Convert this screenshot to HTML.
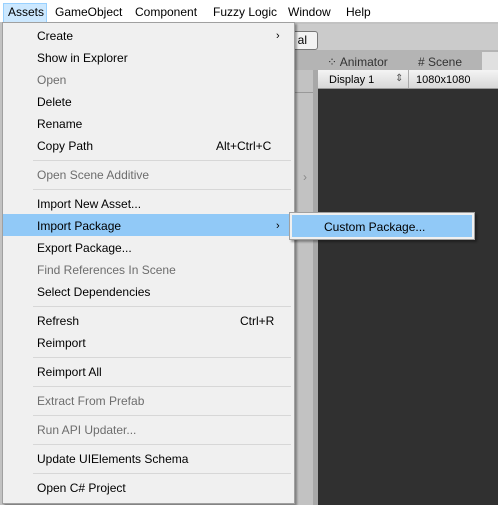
<!DOCTYPE html>
<html><head><style>
body{margin:0;width:498px;height:505px;overflow:hidden;background:#fff;font-family:"Liberation Sans",sans-serif;font-size:12px;position:relative}
.abs{position:absolute}
.mb span{position:absolute;top:5px;color:#000}
.menu{position:absolute;left:2px;top:22px;width:291px;height:480px;background:#f0f0f0;border:1px solid #a0a0a0;box-shadow:2px 2px 2px rgba(0,0,0,.35)}
.it{position:absolute;left:0;width:291px;height:22px;line-height:24px}
.it .t{position:absolute;left:34px}
.it .s{position:absolute;left:213px}
.dis{color:#6d6d6d}
.sep{position:absolute;left:30px;width:258px;height:1px;background:#d7d7d7}
.hl{background:#91c9f7}
.arr{position:absolute;left:273px;font-size:11px}
</style></head><body>
<div class="abs" style="left:0;top:22px;width:498px;height:483px;background:#c2c2c2"></div>
<div class="abs" style="left:294px;top:24px;width:204px;height:26px;background:#cbcbcb"></div>
<div class="abs" style="left:280px;top:31px;width:36px;height:17px;background:#f2f2f2;border:1px solid #777;border-radius:3px;line-height:17px;color:#000">&nbsp;&nbsp;&nbsp;&nbsp;&nbsp;al</div>
<div class="abs" style="left:294px;top:50px;width:204px;height:20px;background:#b4b4b4"></div>
<div class="abs" style="left:327px;top:55px;color:#333;font-size:12px">⁘ Animator</div>
<div class="abs" style="left:418px;top:55px;color:#333;font-size:12px"># Scene</div>
<div class="abs" style="left:482px;top:52px;width:16px;height:18px;background:#e0e0e0"></div>
<div class="abs" style="left:318px;top:70px;width:180px;height:18px;background:linear-gradient(#f4f4f4,#d8d8d8);border-bottom:1px solid #999"></div>
<div class="abs" style="left:329px;top:74px;font-size:11px;color:#000">Display 1</div>
<div class="abs" style="left:395px;top:73px;font-size:10px;color:#555">⇕</div>
<div class="abs" style="left:408px;top:70px;width:1px;height:18px;background:#aaa"></div>
<div class="abs" style="left:416px;top:74px;font-size:11px;color:#000">1080x1080</div>
<div class="abs" style="left:318px;top:89px;width:180px;height:416px;background:#303030"></div>
<div class="abs" style="left:313px;top:70px;width:5px;height:435px;background:#a8a8a8"></div>
<div class="abs" style="left:294px;top:92px;width:19px;height:1px;background:#999"></div>
<div class="abs" style="left:303px;top:170px;color:#888;font-size:12px">›</div>
<div class="abs" style="left:0;top:0;width:498px;height:22px;background:#fff"></div>
<div class="abs" style="left:3px;top:3px;width:42px;height:18px;background:#cce8ff;border:1px solid #99d1ff"></div>
<div class="mb">
<span style="left:8px">Assets</span><span style="left:55px">GameObject</span><span style="left:135px">Component</span><span style="left:213px">Fuzzy Logic</span><span style="left:288px">Window</span><span style="left:346px">Help</span>
</div>
<div class="menu">
<div class="it" style="top:1px"><span class="t">Create</span><span class="arr">›</span></div>
<div class="it" style="top:23px"><span class="t">Show in Explorer</span></div>
<div class="it dis" style="top:45px"><span class="t">Open</span></div>
<div class="it" style="top:67px"><span class="t">Delete</span></div>
<div class="it" style="top:89px"><span class="t">Rename</span></div>
<div class="it" style="top:111px"><span class="t">Copy Path</span><span class="s">Alt+Ctrl+C</span></div>
<div class="sep" style="top:137px"></div>
<div class="it dis" style="top:140px"><span class="t">Open Scene Additive</span></div>
<div class="sep" style="top:166px"></div>
<div class="it" style="top:169px"><span class="t">Import New Asset...</span></div>
<div class="it hl" style="top:191px"><span class="t">Import Package</span><span class="arr">›</span></div>
<div class="it" style="top:213px"><span class="t">Export Package...</span></div>
<div class="it dis" style="top:235px"><span class="t">Find References In Scene</span></div>
<div class="it" style="top:257px"><span class="t">Select Dependencies</span></div>
<div class="sep" style="top:283px"></div>
<div class="it" style="top:286px"><span class="t">Refresh</span><span class="s" style="left:237px">Ctrl+R</span></div>
<div class="it" style="top:308px"><span class="t">Reimport</span></div>
<div class="sep" style="top:334px"></div>
<div class="it" style="top:337px"><span class="t">Reimport All</span></div>
<div class="sep" style="top:363px"></div>
<div class="it dis" style="top:366px"><span class="t">Extract From Prefab</span></div>
<div class="sep" style="top:392px"></div>
<div class="it dis" style="top:395px"><span class="t">Run API Updater...</span></div>
<div class="sep" style="top:421px"></div>
<div class="it" style="top:424px"><span class="t">Update UIElements Schema</span></div>
<div class="sep" style="top:450px"></div>
<div class="it" style="top:453px"><span class="t">Open C# Project</span></div>
</div>
<div class="abs" style="left:289px;top:212px;width:184px;height:26px;background:#f0f0f0;border:1px solid #a0a0a0;box-shadow:2px 2px 2px rgba(0,0,0,.35)">
<div class="abs hl" style="left:2px;top:2px;width:180px;height:22px;line-height:24px"><span style="position:absolute;left:32px">Custom Package...</span></div>
</div>
</body></html>
